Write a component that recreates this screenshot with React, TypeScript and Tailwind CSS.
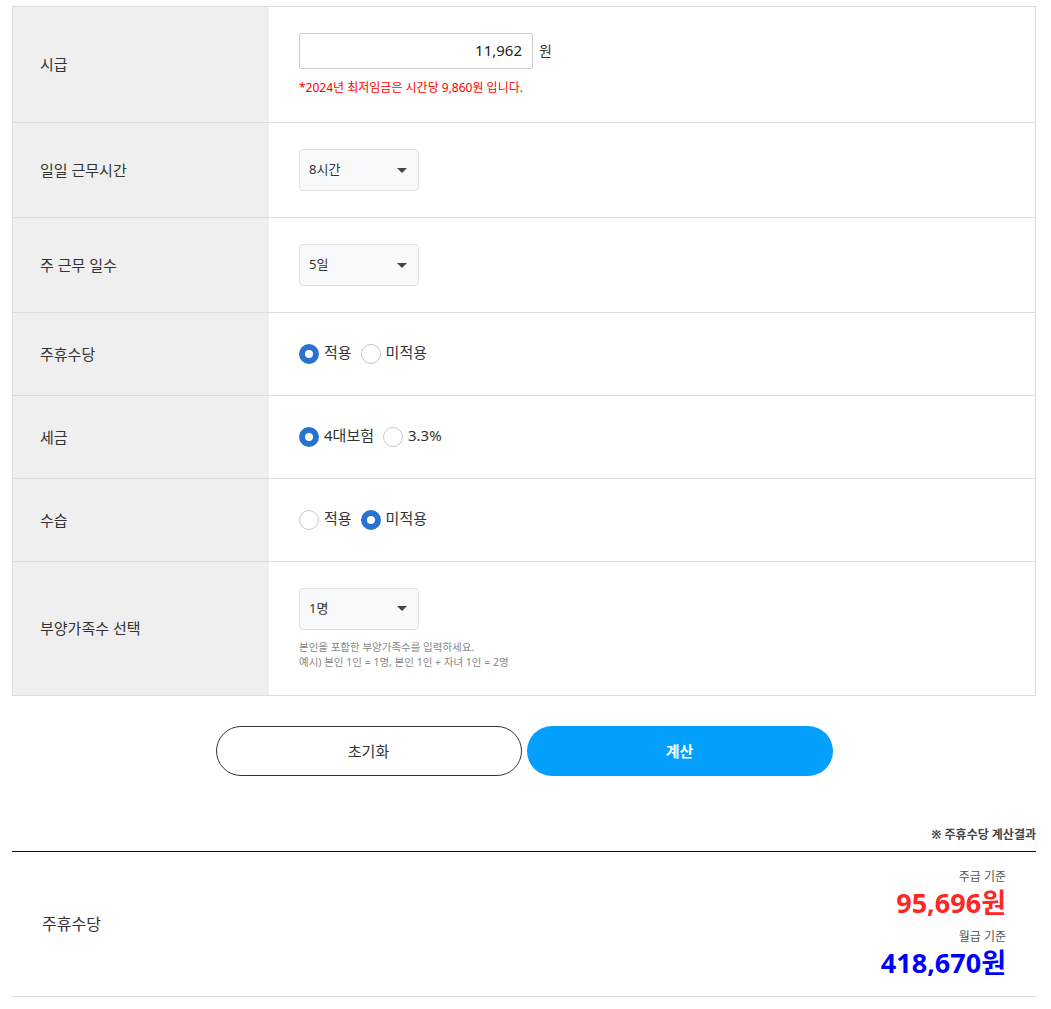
import { useState } from "react";

const font = { fontFamily: '"Noto Sans", "Noto Sans CJK KR", sans-serif' };

function Row({
  label,
  height,
  children,
}: {
  label: string;
  height: string;
  children: React.ReactNode;
}) {
  return (
    <div className={`flex border-t border-[#dcdcdc] first:border-t-0 ${height}`}>
      <div className="flex w-[256px] shrink-0 items-center bg-[#efefef] pl-[27px] text-[15px] text-[#333]">
        {label}
      </div>
      <div className="flex flex-1 flex-col justify-center pl-[30px]">{children}</div>
    </div>
  );
}

function Select({ value }: { value: string }) {
  return (
    <div className="flex h-[42px] w-[120px] items-center justify-between rounded-[4px] border border-[#dee2e6] bg-[#f8f9fa] pl-[9px] pr-[11px] text-[13px] text-[#333]">
      <span>{value}</span>
      <span className="h-0 w-0 border-x-[5px] border-t-[5px] border-x-transparent border-t-[#444]" />
    </div>
  );
}

function Radio({
  options,
  selected,
  onChange,
}: {
  options: string[];
  selected: number;
  onChange: (i: number) => void;
}) {
  return (
    <div className="flex items-center text-[15px] text-[#333]">
      {options.map((o, i) => (
        <label key={o} className="mr-[9px] flex cursor-pointer items-center" onClick={() => onChange(i)}>
          <span
            className={
              i === selected
                ? "mr-[5px] h-[20px] w-[20px] rounded-full border-[6px] border-[#2a72d0] bg-white"
                : "mr-[5px] h-[20px] w-[20px] rounded-full border border-[#c8c8c8] bg-white"
            }
          />
          <span className="-mt-[3px]">{o}</span>
        </label>
      ))}
    </div>
  );
}

export default function App() {
  const [holiday, setHoliday] = useState(0);
  const [tax, setTax] = useState(0);
  const [intern, setIntern] = useState(1);

  return (
    <div className="min-h-[1009px] bg-white pl-[12px] pr-[15px] pt-[6px]" style={font}>
      <div className="border border-[#dcdcdc]">
        <Row label="시급" height="h-[115px]">
          <div className="flex items-center">
            <div className="flex h-[36px] w-[234px] items-center justify-end rounded-[2px] border border-[#ccc] pr-[10px] text-[15px] text-[#222]">
              11,962
            </div>
            <span className="ml-[6px] text-[14px] text-[#333]">원</span>
          </div>
          <p className="mt-[10px] text-[12px] text-[#ff0000]">
            *2024년 최저임금은 시간당 9,860원 입니다.
          </p>
        </Row>
        <Row label="일일 근무시간" height="h-[95px]">
          <Select value="8시간" />
        </Row>
        <Row label="주 근무 일수" height="h-[95px]">
          <Select value="5일" />
        </Row>
        <Row label="주휴수당" height="h-[83px]">
          <Radio options={["적용", "미적용"]} selected={holiday} onChange={setHoliday} />
        </Row>
        <Row label="세금" height="h-[83px]">
          <Radio options={["4대보험", "3.3%"]} selected={tax} onChange={setTax} />
        </Row>
        <Row label="수습" height="h-[83px]">
          <Radio options={["적용", "미적용"]} selected={intern} onChange={setIntern} />
        </Row>
        <Row label="부양가족수 선택" height="h-[134px]">
          <Select value="1명" />
          <p className="mt-[10px] text-[10.5px] leading-[15px] text-[#888]">
            본인을 포함한 부양가족수를 입력하세요.
            <br />
            예시) 본인 1인 = 1명, 본인 1인 + 자녀 1인 = 2명
          </p>
        </Row>
      </div>

      <div className="mt-[30px] flex justify-center gap-[5px]">
        <button
          type="button"
          className="h-[50px] w-[306px] rounded-full border border-[#333] bg-white text-[15px] text-[#333]"
        >
          초기화
        </button>
        <button
          type="button"
          className="h-[50px] w-[306px] rounded-full bg-[#029ffd] text-[15px] font-bold text-white"
        >
          계산
        </button>
      </div>

      <p className="mt-[50px] text-right text-[12px] font-bold text-[#444]">※ 주휴수당 계산결과</p>
      <div className="mt-[7px] border-t border-[#111]" />
      <div className="flex h-[145px] items-center justify-between border-b border-[#dcdcdc] pl-[30px] pr-[30px]">
        <span className="text-[16px] text-[#333]">주휴수당</span>
        <div className="flex flex-col items-end">
          <span className="text-[12px] leading-[18px] text-[#555]">주급 기준</span>
          <span className="text-[27px] font-bold leading-[34px] text-[#ff2626]">95,696원</span>
          <span className="mt-[8px] text-[12px] leading-[18px] text-[#555]">월급 기준</span>
          <span className="text-[27px] font-bold leading-[34px] text-[#0000ff]">418,670원</span>
        </div>
      </div>
    </div>
  );
}
